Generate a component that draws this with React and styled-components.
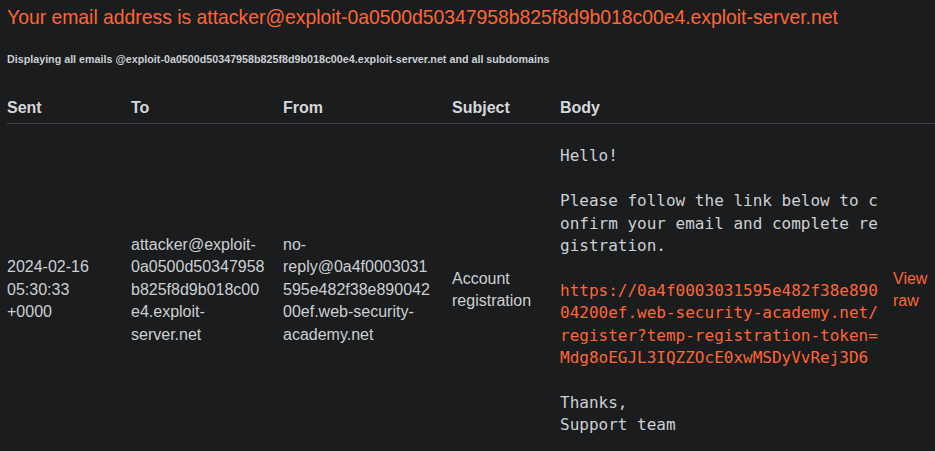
import React from "react";
import styled, { createGlobalStyle } from "styled-components";

const Global = createGlobalStyle`
  html, body { margin: 0; padding: 0; background: #1b1c1e; }
  body { font-family: "Liberation Sans", Arial, sans-serif; color: #cbd0d3; }
`;

const Page = styled.div`
  padding: 6px 0 0 7px;
  overflow: hidden;
`;

const Title = styled.h1`
  margin: 0;
  font-size: 19.35px;
  line-height: 22px;
  font-weight: 400;
  color: #ff6633;
  white-space: nowrap;
`;

const Note = styled.h4`
  margin: 25px 0 0;
  font-size: 10.72px;
  line-height: 13px;
  font-weight: 700;
  color: #cbd0d3;
`;

const Table = styled.table`
  margin-top: 31px;
  width: 928px;
  border-collapse: collapse;
  table-layout: fixed;
  font-size: 16px;
  line-height: 22.4px;
`;

const Th = styled.th`
  text-align: left;
  font-weight: 700;
  padding: 0 0 4px;
  border-bottom: 1px solid #3c3d40;
  color: #d4d8db;
`;

const Td = styled.td`
  vertical-align: middle;
  padding: 0 ${(p) => p.$pr ?? 16}px 0 0;
  overflow-wrap: anywhere;
  color: #cbd0d3;
`;

const BodyCell = styled.td`
  vertical-align: middle;
  padding: 21px 10px 19px 0;
`;

const Pre = styled.pre`
  margin: 0;
  white-space: pre-wrap;
  word-break: break-all;
  font-family: "DejaVu Sans Mono", monospace;
  font-size: 16px;
  line-height: 22.4px;
  color: #cbd0d3;
`;

const Link = styled.a`
  color: #ff6633;
  text-decoration: none;
`;

const cols = [124, 152, 169, 108, 333, null];

export default function App() {
  return (
    <>
      <Global />
      <Page>
        <Title>
          Your email address is attacker@exploit-0a0500d50347958b825f8d9b018c00e4.exploit-server.net
        </Title>
        <Note>
          Displaying all emails @exploit-0a0500d50347958b825f8d9b018c00e4.exploit-server.net and all subdomains
        </Note>
        <Table>
          <colgroup>
            {cols.map((w, i) => (
              <col key={i} style={w ? { width: w } : undefined} />
            ))}
          </colgroup>
          <thead>
            <tr>
              <Th>Sent</Th>
              <Th>To</Th>
              <Th>From</Th>
              <Th>Subject</Th>
              <Th>Body</Th>
              <Th></Th>
            </tr>
          </thead>
          <tbody>
            <tr>
              <Td>2024-02-16 05:30:33 +0000</Td>
              <Td>attacker@exploit-0a0500d50347958b825f8d9b018c00e4.exploit-server.net</Td>
              <Td $pr={18}>no-reply@0a4f0003031595e482f38e89004200ef.web-security-academy.net</Td>
              <Td>Account registration</Td>
              <BodyCell>
                <Pre>
                  {"Hello!\n\nPlease follow the link below to confirm your email and complete registration.\n\n"}
                  <Link href="#">
                    https://0a4f0003031595e482f38e89004200ef.web-security-academy.net/register?temp-registration-token=Mdg8oEGJL3IQZZOcE0xwMSDyVvRej3D6
                  </Link>
                  {"\n\nThanks,\nSupport team"}
                </Pre>
              </BodyCell>
              <Td $pr={0}>
                <Link href="#">View raw</Link>
              </Td>
            </tr>
          </tbody>
        </Table>
      </Page>
    </>
  );
}
